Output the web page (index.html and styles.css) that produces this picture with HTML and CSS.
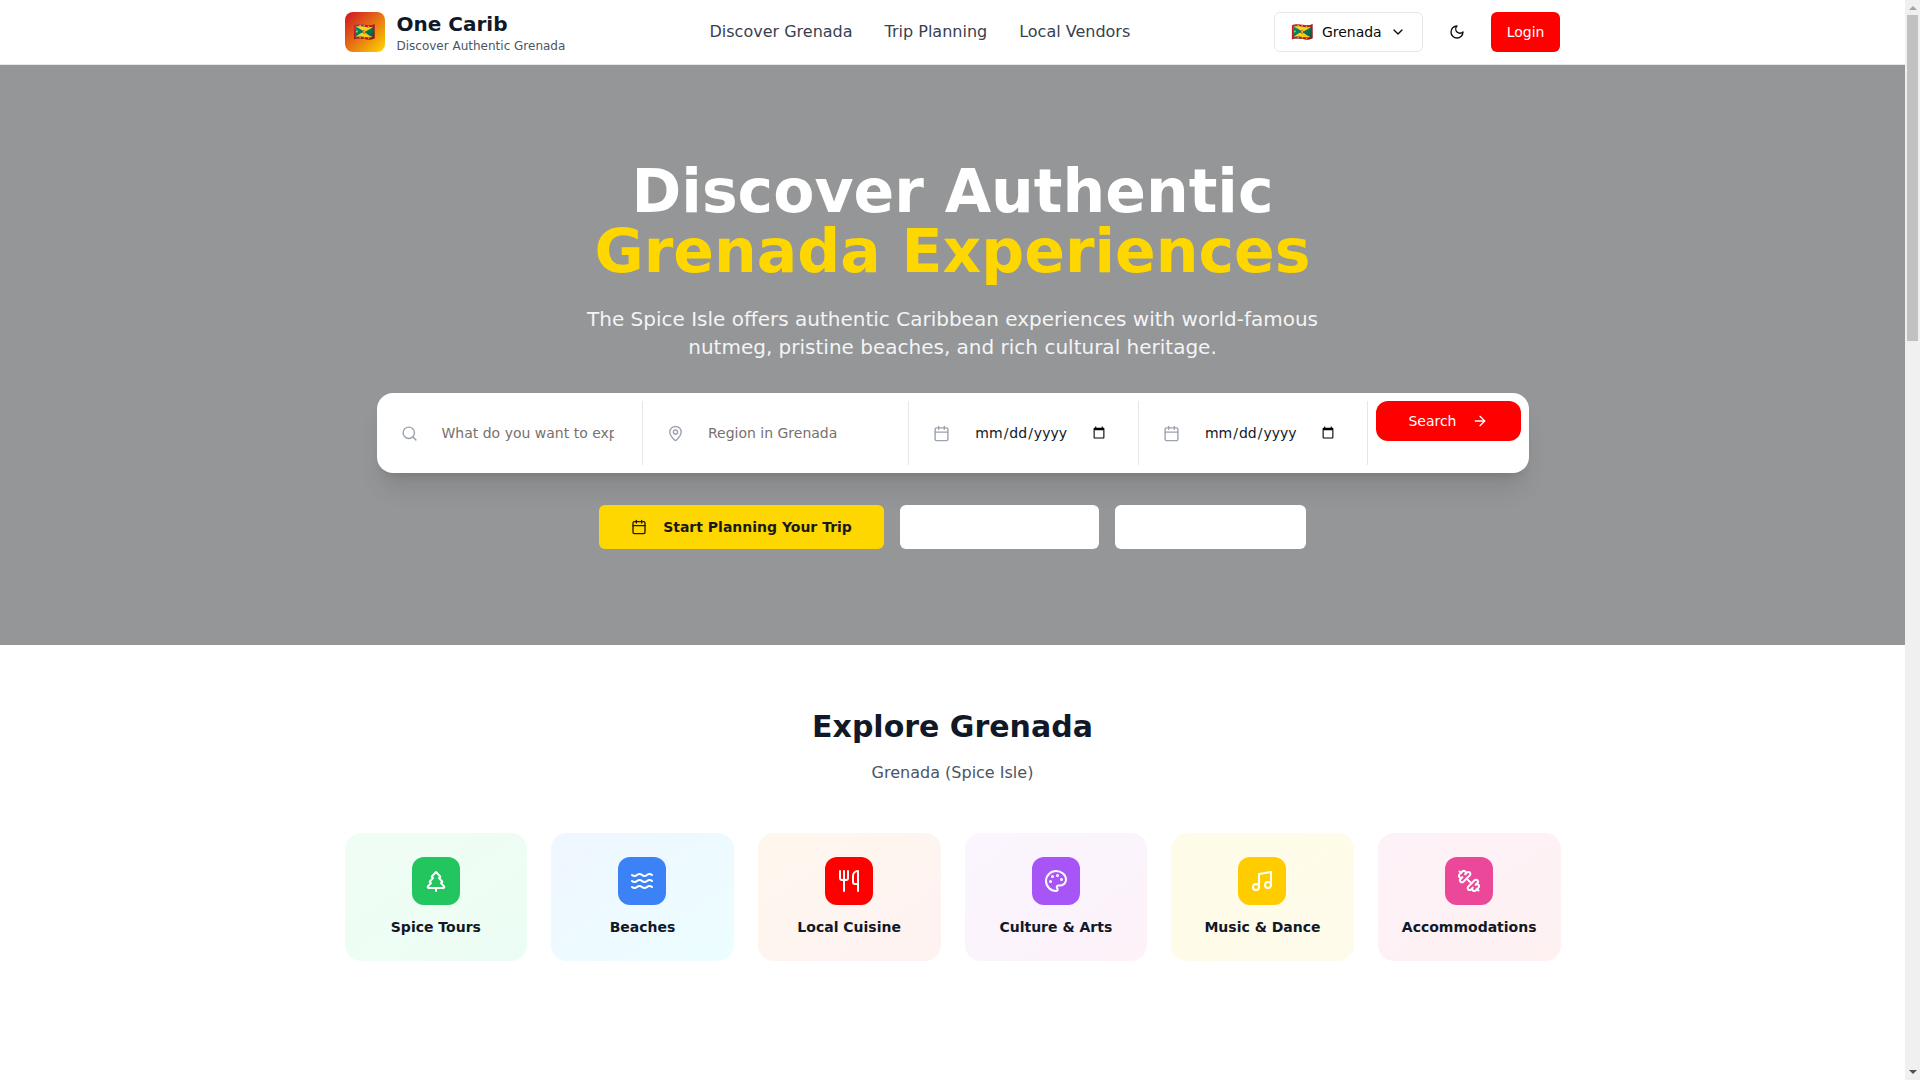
FILE: index.html
```html
<!DOCTYPE html>
<html lang="en">
<head>
  <meta charset="UTF-8">
  <title>One Carib - Discover Authentic Grenada</title>
  <meta name="viewport" content="width=device-width, initial-scale=1">
  <link rel="stylesheet" href="styles.css">
</head>
<body>

  <div class="page">
    <header class="header">
      <div class="container header-inner">
        <a href="#" class="brand">
          <span class="brand-logo">🇬🇩</span>
          <span class="brand-text">
            <span class="brand-name">One Carib</span>
            <span class="brand-tagline">Discover Authentic Grenada</span>
          </span>
        </a>

        <nav class="nav">
          <a href="#">Discover Grenada</a>
          <a href="#">Trip Planning</a>
          <a href="#">Local Vendors</a>
        </nav>

        <div class="header-actions">
          <button type="button" class="country-btn">
            <span class="flag">🇬🇩</span>
            <span>Grenada</span>
            <svg class="icon" viewBox="0 0 24 24"><path d="m6 9 6 6 6-6"/></svg>
          </button>
          <button type="button" class="theme-btn" aria-label="Toggle theme">
            <svg class="icon" viewBox="0 0 24 24"><path d="M12 3a6 6 0 0 0 9 9 9 9 0 1 1-9-9Z"/></svg>
          </button>
          <button type="button" class="login-btn">Login</button>
        </div>
      </div>
    </header>

    <main>
      <section class="hero">
        <h1>Discover Authentic <span>Grenada Experiences</span></h1>
        <p class="hero-text">The Spice Isle offers authentic Caribbean experiences with world-famous nutmeg, pristine beaches, and rich cultural heritage.</p>

        <form class="search">
          <label class="field">
            <svg viewBox="0 0 24 24"><circle cx="11" cy="11" r="8"/><path d="m21 21-4.3-4.3"/></svg>
            <input type="text" placeholder="What do you want to experience?" aria-label="Experience">
          </label>
          <label class="field">
            <svg viewBox="0 0 24 24"><path d="M20 10c0 4.993-5.539 10.193-7.399 11.799a1 1 0 0 1-1.202 0C9.539 20.193 4 14.993 4 10a8 8 0 0 1 16 0"/><circle cx="12" cy="10" r="3"/></svg>
            <input type="text" placeholder="Region in Grenada" aria-label="Region">
          </label>
          <label class="field">
            <svg viewBox="0 0 24 24"><path d="M8 2v4M16 2v4M3 10h18"/><rect width="18" height="18" x="3" y="4" rx="2"/></svg>
            <input type="date" aria-label="Start date">
          </label>
          <label class="field">
            <svg viewBox="0 0 24 24"><path d="M8 2v4M16 2v4M3 10h18"/><rect width="18" height="18" x="3" y="4" rx="2"/></svg>
            <input type="date" aria-label="End date">
          </label>
          <button type="submit" class="search-btn">
            Search
            <svg class="icon" viewBox="0 0 24 24"><path d="M5 12h14"/><path d="m12 5 7 7-7 7"/></svg>
          </button>
        </form>

        <div class="hero-buttons">
          <button type="button" class="btn btn-gold">
            <svg class="icon" viewBox="0 0 24 24"><path d="M8 2v4M16 2v4M3 10h18"/><rect width="18" height="18" x="3" y="4" rx="2"/></svg>
            Start Planning Your Trip
          </button>
          <button type="button" class="btn btn-white btn-vendors" aria-label="Local vendors"></button>
          <button type="button" class="btn btn-white btn-explore" aria-label="Explore"></button>
        </div>
      </section>

      <section class="explore container">
        <h2>Explore Grenada</h2>
        <p class="explore-text">Grenada (Spice Isle)</p>

        <div class="categories">
          <a href="#" class="category spice">
            <span class="category-icon">
              <svg viewBox="0 0 24 24"><path d="m17 14 3 3.3a1 1 0 0 1-.7 1.7H4.7a1 1 0 0 1-.7-1.700L7 14h-.3a1 1 0 0 1-.7-1.700L9 9h-.2A1 1 0 0 1 8 7.300L12 3l4 4.300a1 1 0 0 1-.8 1.700H15l3 3.300a1 1 0 0 1-.7 1.700H17Z"/><path d="M12 22v-3"/></svg>
            </span>
            Spice Tours
          </a>
          <a href="#" class="category beaches">
            <span class="category-icon">
              <svg viewBox="0 0 24 24"><path d="M2 6c.6.5 1.2 1 2.5 1C7 7 7 5 9.5 5c2.6 0 2.4 2 5 2 2.5 0 2.5-2 5-2 1.3 0 1.9.5 2.5 1"/><path d="M2 12c.6.5 1.2 1 2.5 1 2.5 0 2.5-2 5-2 2.6 0 2.4 2 5 2 2.5 0 2.5-2 5-2 1.3 0 1.9.5 2.5 1"/><path d="M2 18c.6.5 1.2 1 2.5 1 2.5 0 2.5-2 5-2 2.6 0 2.4 2 5 2 2.5 0 2.5-2 5-2 1.3 0 1.9.5 2.5 1"/></svg>
            </span>
            Beaches
          </a>
          <a href="#" class="category cuisine">
            <span class="category-icon">
              <svg viewBox="0 0 24 24"><path d="M3 2v7c0 1.1.9 2 2 2h4a2 2 0 0 0 2-2V2"/><path d="M7 2v20"/><path d="M21 15V2a5 5 0 0 0-5 5v6c0 1.1.9 2 2 2h3Zm0 0v7"/></svg>
            </span>
            Local Cuisine
          </a>
          <a href="#" class="category culture">
            <span class="category-icon">
              <svg viewBox="0 0 24 24"><g fill="currentColor"><circle cx="13.5" cy="6.5" r=".5"/><circle cx="17.5" cy="10.5" r=".5"/><circle cx="8.5" cy="7.5" r=".5"/><circle cx="6.5" cy="12.5" r=".5"/></g><path d="M12 2C6.5 2 2 6.5 2 12s4.5 10 10 10c.926 0 1.648-.746 1.648-1.688 0-.437-.18-.835-.437-1.125-.29-.289-.438-.652-.438-1.125a1.64 1.64 0 0 1 1.668-1.668h1.996c3.051 0 5.555-2.503 5.555-5.554C21.965 6.012 17.461 2 12 2z"/></svg>
            </span>
            Culture &amp; Arts
          </a>
          <a href="#" class="category music">
            <span class="category-icon">
              <svg viewBox="0 0 24 24"><path d="M9 18V5l12-2v13"/><circle cx="6" cy="18" r="3"/><circle cx="18" cy="16" r="3"/></svg>
            </span>
            Music &amp; Dance
          </a>
          <a href="#" class="category stays">
            <span class="category-icon">
              <svg viewBox="0 0 24 24"><path d="M14.4 14.4 9.6 9.6"/><path d="M18.657 21.485a2 2 0 1 1-2.829-2.828l-1.767 1.768a2 2 0 1 1-2.829-2.829l6.364-6.364a2 2 0 1 1 2.829 2.829l-1.768 1.767a2 2 0 1 1 2.828 2.829z"/><path d="m21.5 21.5-1.4-1.4"/><path d="M3.9 3.9 2.5 2.5"/><path d="M6.404 12.768a2 2 0 1 1-2.829-2.829l1.768-1.767a2 2 0 1 1-2.828-2.829l2.828-2.828a2 2 0 1 1 2.829 2.828l1.767-1.768a2 2 0 1 1 2.829 2.829z"/></svg>
            </span>
            Accommodations
          </a>
        </div>
      </section>
    </main>
  </div>

  <div class="scrollbar" aria-hidden="true">
    <span class="arrow arrow-up"></span>
    <div class="track"><div class="thumb"></div></div>
    <span class="arrow arrow-down"></span>
  </div>

</body>
</html>
```
FILE: styles.css
```css
* { box-sizing: border-box; margin: 0; padding: 0; }

body {
  font-family: "DejaVu Sans", "Noto Color Emoji", sans-serif;
  font-size: 16px;
  line-height: 24px;
  color: #111827;
  background: #fff;
  min-height: 100vh;
  display: flex;
}

a {
  color: inherit;
  text-decoration: none;
}

button, input {
  font: inherit;
  color: inherit;
  border: none;
}

button {
  cursor: pointer;
}

svg {
  width: 24px;
  height: 24px;
  flex-shrink: 0;
  fill: none;
  stroke: currentColor;
  stroke-width: 2;
  stroke-linecap: round;
  stroke-linejoin: round;
}

.icon {
  width: 16px;
  height: 16px;
}

.page {
  flex: 1;
  min-width: 0;
}

.container {
  max-width: 1280px;
  margin: 0 auto;
  padding: 0 32px;
}

/* header */
.header {
  background: #fff;
  border-bottom: 1px solid #e5e7eb;
}

.header-inner {
  height: 64px;
  display: flex;
  align-items: center;
  justify-content: space-between;
}

.brand {
  display: flex;
  align-items: center;
  gap: 12px;
}

.brand-logo {
  width: 40px;
  height: 40px;
  border-radius: 8px;
  display: flex;
  align-items: center;
  justify-content: center;
  font-size: 18px;
  background: linear-gradient(135deg, #ce1126, #ffd700);
}

.brand-text {
  display: flex;
  flex-direction: column;
}

.brand-name {
  font-size: 20px;
  line-height: 28px;
  font-weight: bold;
}

.brand-tagline {
  font-size: 12px;
  line-height: 16px;
  color: #4b5563;
}

.nav {
  display: flex;
  gap: 32px;
  color: #374151;
}

.header-actions {
  display: flex;
  align-items: center;
  gap: 16px;
  font-size: 14px;
  line-height: 20px;
  color: #0c0a09;
}

.country-btn {
  height: 40px;
  padding: 0 16px;
  display: flex;
  align-items: center;
  gap: 8px;
  background: #fff;
  border: 1px solid #e5e7eb;
  border-radius: 6px;
}

.flag {
  font-size: 18px;
}

.theme-btn {
  width: 36px;
  height: 36px;
  display: flex;
  align-items: center;
  justify-content: center;
  background: none;
  border-radius: 6px;
}

.login-btn {
  height: 40px;
  padding: 0 16px;
  background: #f00;
  color: #fff;
  border-radius: 6px;
}

/* hero */
.hero {
  padding: 96px 32px;
  display: flex;
  flex-direction: column;
  align-items: center;
  text-align: center;
  background: #959697;
}

.hero h1 {
  margin-bottom: 24px;
  font-size: 60px;
  line-height: 60px;
  color: #fff;
}

.hero h1 span {
  display: block;
  color: #ffd700;
}

.hero-text {
  max-width: 768px;
  margin-bottom: 32px;
  font-size: 20px;
  line-height: 28px;
  color: #f3f4f6;
}

.search {
  width: 100%;
  max-width: 1152px;
  margin-bottom: 32px;
  padding: 8px;
  display: grid;
  grid-template-columns: 7fr 7fr 6fr 6fr auto;
  gap: 8px;
  align-items: start;
  font-size: 14px;
  line-height: 20px;
  background: #fff;
  border-radius: 16px;
  box-shadow: 0 20px 25px -5px rgba(0,0,0,0.1), 0 8px 10px -6px rgba(0,0,0,0.1);
}

.field {
  min-width: 0;
  padding: 12px 16px;
  display: flex;
  align-items: center;
  gap: 12px;
  color: #9ca3af;
  border-right: 1px solid #e5e7eb;
}

.field svg {
  width: 17px;
  height: 17px;
}

.field input {
  flex: 1;
  min-width: 0;
  height: 40px;
  padding: 8px 12px;
  color: #111827;
  background: none;
}

.field input[type="date"] {
  padding-right: 14px;
}

.field input::placeholder {
  color: #78716c;
}

.search-btn {
  height: 40px;
  padding: 0 32px;
  display: flex;
  align-items: center;
  gap: 16px;
  background: #f00;
  color: #fff;
  border-radius: 12px;
}

.hero-buttons {
  display: flex;
  gap: 16px;
}

.btn {
  height: 44px;
  padding: 0 32px;
  display: flex;
  align-items: center;
  gap: 16px;
  font-size: 14px;
  font-weight: bold;
  border-radius: 6px;
}

.btn-gold {
  background: #ffd700;
  color: #1a1a1a;
}

.btn-white {
  background: #fff;
}

.btn-vendors {
  width: 199px;
}

.btn-explore {
  width: 191px;
}

/* explore */
.explore {
  padding-top: 64px;
  padding-bottom: 64px;
  text-align: center;
}

.explore h2 {
  margin-bottom: 16px;
  font-size: 30px;
  line-height: 36px;
}

.explore-text {
  margin-bottom: 48px;
  color: #4b5563;
}

.categories {
  display: grid;
  grid-template-columns: repeat(6, 1fr);
  gap: 24px;
}

.category {
  padding: 24px 0;
  display: flex;
  flex-direction: column;
  align-items: center;
  gap: 12px;
  font-size: 14px;
  line-height: 20px;
  font-weight: bold;
  border-radius: 16px;
}

.category-icon {
  width: 48px;
  height: 48px;
  display: flex;
  align-items: center;
  justify-content: center;
  color: #fff;
  border-radius: 12px;
}

.spice { background: linear-gradient(to bottom right, #f0fdf4, #ecfdf5); }
.spice .category-icon { background: #22c55e; }

.beaches { background: linear-gradient(to bottom right, #eff6ff, #ecfeff); }
.beaches .category-icon { background: #3b82f6; }

.cuisine { background: linear-gradient(to bottom right, #fff7ed, #fef2f2); }
.cuisine .category-icon { background: #f00; }

.culture { background: linear-gradient(to bottom right, #faf5ff, #fdf2f8); }
.culture .category-icon { background: #a855f7; }

.music { background: linear-gradient(to bottom right, #fefce8, #fffbeb); }
.music .category-icon { background: #fc0; }

.stays { background: linear-gradient(to bottom right, #fdf2f8, #fff1f2); }
.stays .category-icon { background: #ec4899; }

/* scrollbar */
.scrollbar {
  position: sticky;
  top: 0;
  width: 15px;
  height: 100vh;
  display: flex;
  flex-direction: column;
  align-items: center;
  background: #f0f0f0;
}

.arrow {
  border: 4px solid transparent;
}

.arrow-up {
  margin: 2px 0 5px;
  border-bottom-color: #a3a3a3;
}

.arrow-down {
  margin: 5px 0 2px;
  border-top-color: #505050;
}

.track {
  flex: 1;
  width: 11px;
}

.thumb {
  height: 31%;
  background: #c1c1c1;
}
```
